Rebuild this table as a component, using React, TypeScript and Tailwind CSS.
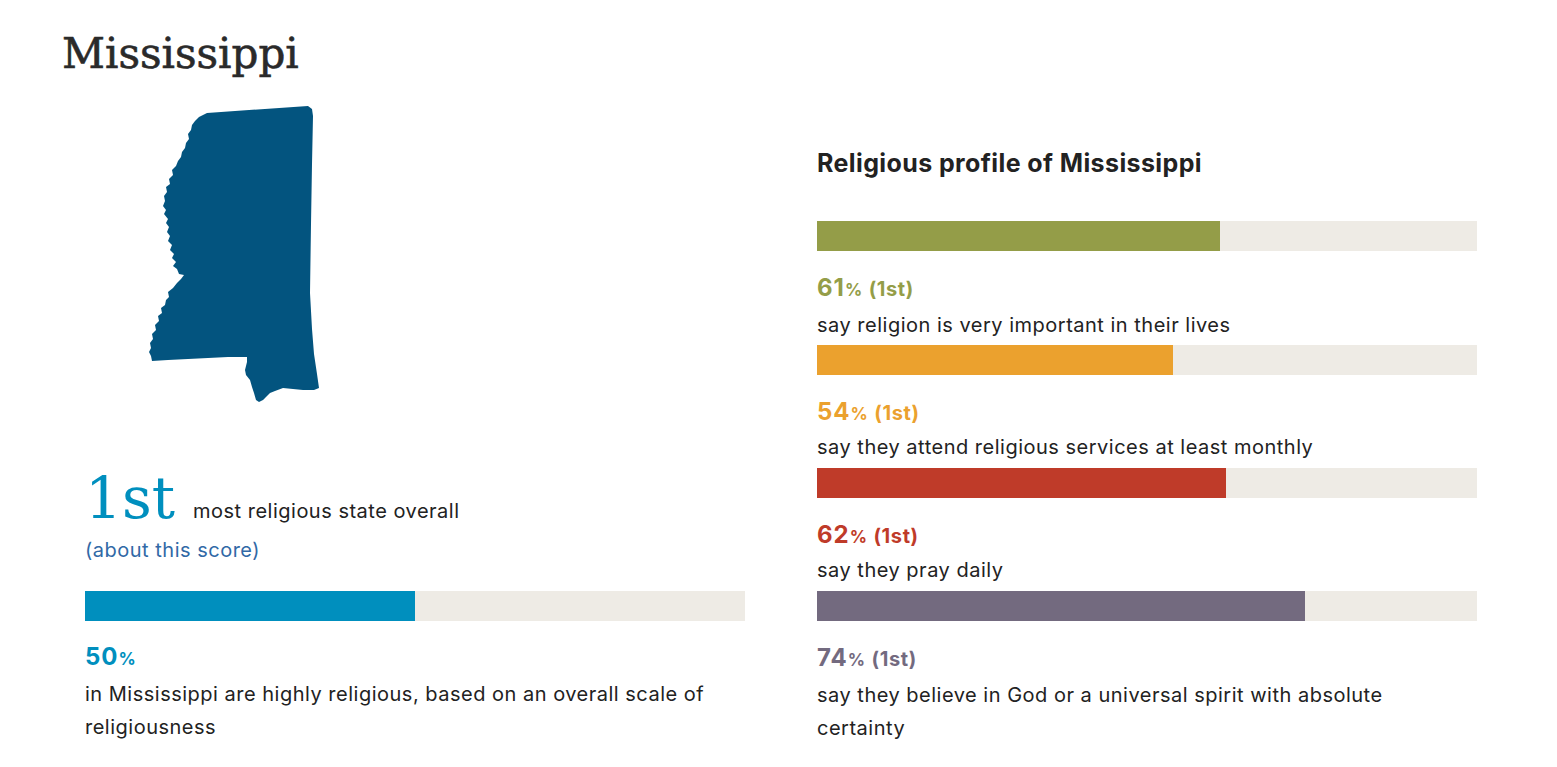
import React from "react";

const sans = { fontFamily: "Inter, 'Liberation Sans', sans-serif" };

function MapMS() {
  const d =
    "M59 9 L160 2 L164 5 L165 12 L164 60 L163 120 L162 189 L164 225 L166 250 L169 270 L171 284 L166 286 L155 286 L145 285 L135 284 L127 287 L122 289 L118 293 L115 296 L111 298 L108 296 L106 289 L104 283 L102 276 L98 271 L97 266 L99 258 L99 253 L80 253 L60 254 L40 255 L20 256 L4 257 L3 252 L1 248 L3 244 L2 239 L5 235 L4 230 L8 226 L7 221 L11 217 L10 212 L14 209 L13 204 L17 201 L18 196 L21 193 L20 188 L25 184 L29 179 L33 175 L36 171 L31 170 L29 165 L25 162 L28 158 L24 154 L26 150 L22 146 L24 141 L20 137 L22 132 L19 128 L21 123 L18 119 L20 115 L16 110 L18 106 L15 102 L17 97 L16 92 L19 88 L18 83 L22 80 L21 75 L25 71 L24 66 L28 62 L30 57 L33 53 L34 48 L37 44 L38 39 L41 35 L40 30 L43 26 L44 21 L47 17 L51 13 L55 11 Z";
  return (
    <svg width="172" height="300" viewBox="0 0 172 300" className="block ml-[63px] mt-[26px]">
      <path d={d} fill="#03547f" />
    </svg>
  );
}

function Bar({ pct, color }: { pct: number; color: string }) {
  return (
    <div className="w-[660px] h-[30px] bg-[#eeebe5] flex">
      <div className="h-full" style={{ width: `${pct}%`, backgroundColor: color }} />
    </div>
  );
}

const items = [
  { pct: 61, color: "#949d48", text: ["say religion is very important in their lives"] },
  { pct: 54, color: "#eba12e", text: ["say they attend religious services at least monthly"] },
  { pct: 62, color: "#bf3b29", text: ["say they pray daily"] },
  { pct: 74, color: "#736a7f", text: ["say they believe in God or a universal spirit with absolute", "certainty"] },
];

function Label({ pct, color, rank }: { pct: number; color: string; rank: boolean }) {
  return (
    <div className="flex items-baseline h-[28px] font-bold" style={{ color }}>
      <span className="text-[24px] leading-[28px] tracking-[1px]">{pct}</span>
      <span className="text-[17px] leading-[28px]">%</span>
      {rank && <span className="text-[20px] leading-[28px] ml-[6px] tracking-[0.6px]">(1st)</span>}
    </div>
  );
}

export default function App() {
  return (
    <div
      className="w-[1557px] h-[767px] bg-white text-[#222222] overflow-hidden tracking-[0.5px]"
      style={sans}
    >
      <h1
        className="pl-[62px] pt-[30px] text-[42px] leading-[48px] font-normal tracking-normal text-[#2a2a2a] [-webkit-text-stroke:0.6px_#2a2a2a]"
        style={{ fontFamily: "'DejaVu Serif', serif" }}
      >
        Mississippi
      </h1>
      <div className="flex items-start">
        <div className="ml-[85px] w-[660px]">
          <MapMS />
          <div className="flex items-baseline mt-[58px] h-[72px]">
            <span
              className="text-[58px] leading-[72px] tracking-normal text-[#008fbe]"
              style={{ fontFamily: "'DejaVu Serif', serif" }}
            >
              1st
            </span>
            <span className="ml-[18px] text-[20px]">most religious state overall</span>
          </div>
          <div className="mt-[2px] text-[20px] leading-[28px] text-[#3169a6]">(about this score)</div>
          <div className="mt-[27px]">
            <Bar pct={50} color="#008fbe" />
          </div>
          <div className="mt-[22px]">
            <Label pct={50} color="#008fbe" rank={false} />
          </div>
          <div className="mt-[7px] text-[20px] leading-[33px]">
            in Mississippi are highly religious, based on an overall scale of
            <br />
            religiousness
          </div>
        </div>
        <div className="ml-[72px] w-[660px] pt-[69px]">
          <h2 className="text-[25px] leading-[32px] font-bold tracking-[0.4px] text-[#222222]">
            Religious profile of Mississippi
          </h2>
          <div className="mt-[42px] flex flex-col">
            {items.map((it, i) => (
              <div key={i} className={i === 0 ? "" : i === 1 ? "mt-[3px]" : "mt-[4px]"}>
                <Bar pct={it.pct} color={it.color} />
                <div className="mt-[23px]">
                  <Label pct={it.pct} color={it.color} rank={true} />
                </div>
                <div className={(i === 0 || i === 3 ? "mt-[7px]" : "mt-[5px]") + " text-[20px] leading-[33px]"}>
                  {it.text.map((t, j) => (
                    <React.Fragment key={j}>
                      {j > 0 && <br />}
                      {t}
                    </React.Fragment>
                  ))}
                </div>
              </div>
            ))}
          </div>
        </div>
      </div>
    </div>
  );
}
